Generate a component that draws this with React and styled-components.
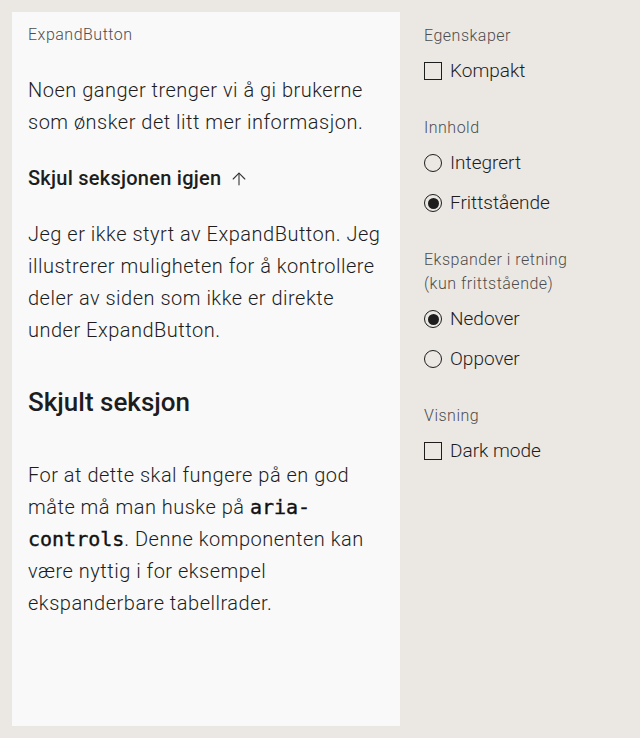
import React, { useState } from "react";
import styled, { createGlobalStyle } from "styled-components";
import { ArrowUp } from "lucide-react";

const GlobalStyle = createGlobalStyle`
  html, body {
    margin: 0;
    padding: 0;
    background: #ebe8e4;
    font-family: Roboto, "Noto Sans", sans-serif;
    color: #1d1d1d;
  }
`;

const Page = styled.div`
  display: flex;
  min-height: 738px;
  padding: 12px 0 12px 12px;
  box-sizing: border-box;
`;

const Card = styled.div`
  width: 388px;
  flex-shrink: 0;
  background: #f9f9f9;
  padding: 11px 16px;
  box-sizing: border-box;
`;

const Label = styled.div`
  font-size: 16px;
  line-height: 24px;
  font-weight: 300;
  letter-spacing: 0.5px;
  color: #4d4d4d;
`;

const Text = styled.p`
  font-size: 20px;
  line-height: 32px;
  font-weight: 300;
  letter-spacing: 0.5px;
  margin: 0;
  margin-top: ${p => p.$top || 0}px;
`;

const ToggleButton = styled.button`
  display: flex;
  align-items: center;
  gap: 8px;
  margin-top: 24px;
  padding: 0;
  border: none;
  background: none;
  font-family: inherit;
  font-size: 20px;
  line-height: 32px;
  font-weight: 500;
  letter-spacing: 0.25px;
  color: #1d1d1d;
  cursor: pointer;
  svg {
    color: #333;
    margin-top: 2px;
  }
`;

const Heading = styled.h2`
  font-size: 26px;
  line-height: 36px;
  font-weight: 500;
  margin: 38px 0 39px;
`;

const Code = styled.code`
  font-family: "DejaVu Sans Mono", monospace;
  font-weight: 400;
  font-size: 20px;
  letter-spacing: 0;
  color: #111;
  -webkit-text-stroke: 0.4px #111;
`;

const Panel = styled.div`
  flex: 1;
  padding: 12px 24px;
`;

const Group = styled.fieldset`
  border: none;
  margin: 0 0 29px;
  padding: 0;
  display: flex;
  flex-direction: column;
  gap: 8px;
`;

const Legend = styled.div`
  font-size: 16px;
  line-height: 24px;
  font-weight: 300;
  letter-spacing: 0.5px;
  color: #4d4d4d;
  margin-bottom: -1px;
`;

const Option = styled.label`
  display: flex;
  align-items: center;
  gap: 8px;
  font-size: 19px;
  line-height: 32px;
  font-weight: 300;
  cursor: pointer;
`;

const Box = styled.span`
  width: 18px;
  height: 18px;
  border: 1.5px solid #1d1d1d;
  box-sizing: border-box;
  flex-shrink: 0;
  border-radius: ${p => (p.$round ? "50%" : "0")};
  display: flex;
  align-items: center;
  justify-content: center;
  &::after {
    content: "";
    display: ${p => (p.$on ? "block" : "none")};
    width: 11px;
    height: 11px;
    border-radius: 50%;
    background: #1d1d1d;
  }
`;

export default function App() {
  const [innhold, setInnhold] = useState("fritt");
  const [retning, setRetning] = useState("ned");

  return (
    <>
      <GlobalStyle />
      <Page>
        <Card>
          <Label>ExpandButton</Label>
          <Text $top={27}>
            Noen ganger trenger vi å gi brukerne som ønsker det litt mer informasjon.
          </Text>
          <ToggleButton>
            Skjul seksjonen igjen
            <ArrowUp size={20} strokeWidth={1.3} />
          </ToggleButton>
          <Text $top={24}>
            Jeg er ikke styrt av ExpandButton. Jeg illustrerer muligheten for å
            kontrollere deler av siden som ikke er direkte under ExpandButton.
          </Text>
          <Heading>Skjult seksjon</Heading>
          <Text>
            For at dette skal fungere på en god måte må man huske på{" "}
            <Code>aria-controls</Code>. Denne komponenten kan være nyttig i for
            eksempel ekspanderbare tabellrader.
          </Text>
        </Card>
        <Panel>
          <Group>
            <Legend>Egenskaper</Legend>
            <Option>
              <Box />
              Kompakt
            </Option>
          </Group>
          <Group>
            <Legend>Innhold</Legend>
            <Option onClick={() => setInnhold("int")}>
              <Box $round $on={innhold === "int"} />
              Integrert
            </Option>
            <Option onClick={() => setInnhold("fritt")}>
              <Box $round $on={innhold === "fritt"} />
              Frittstående
            </Option>
          </Group>
          <Group>
            <Legend>
              Ekspander i retning
              <br />
              (kun frittstående)
            </Legend>
            <Option onClick={() => setRetning("ned")}>
              <Box $round $on={retning === "ned"} />
              Nedover
            </Option>
            <Option onClick={() => setRetning("opp")}>
              <Box $round $on={retning === "opp"} />
              Oppover
            </Option>
          </Group>
          <Group>
            <Legend>Visning</Legend>
            <Option>
              <Box />
              Dark mode
            </Option>
          </Group>
        </Panel>
      </Page>
    </>
  );
}
